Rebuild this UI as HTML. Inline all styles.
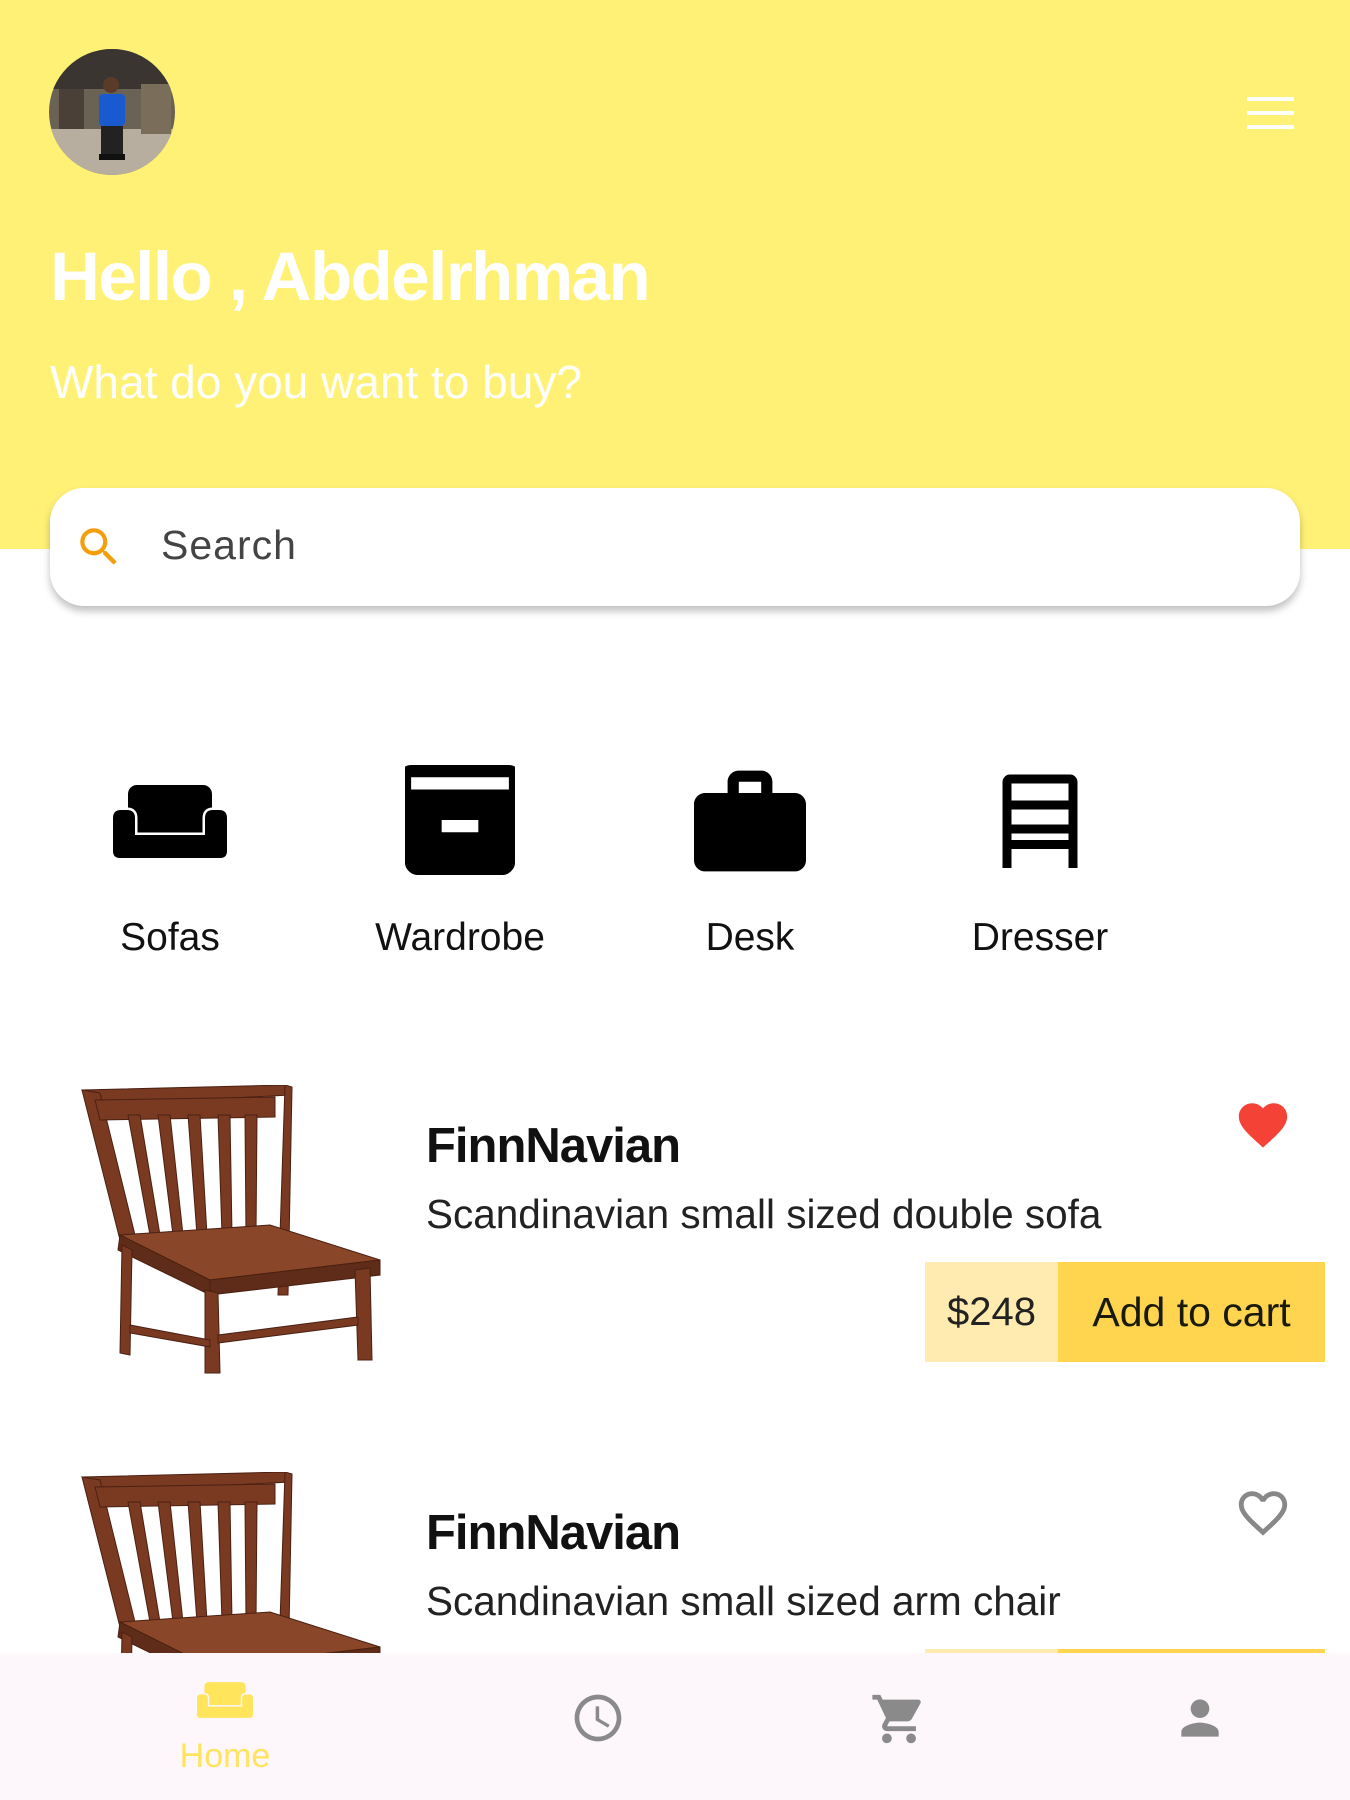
<!DOCTYPE html>
<html><head><meta charset="utf-8"><style>
*{margin:0;padding:0;box-sizing:border-box}
body{width:1350px;height:1800px;background:#fff;font-family:"Liberation Sans",sans-serif;position:relative;overflow:hidden}
.hdr{position:absolute;left:0;top:0;width:1350px;height:549px;background:#fff176}
.abs{position:absolute}
.cat{position:absolute;top:912px;width:200px;text-align:center;font-size:39px;color:#111}
.title{position:absolute;left:426px;font-size:49px;font-weight:bold;color:#111;letter-spacing:-1px}
.sub{position:absolute;left:426px;font-size:40.5px;color:#222}
.nav{position:absolute;left:0;top:1653px;width:1350px;height:147px;background:#fdf6fb}
</style></head><body>
<div class="hdr"></div>
<svg class="abs" style="left:49px;top:49px" width="126" height="126" viewBox="0 0 126 126">
<defs><clipPath id="c"><circle cx="63" cy="63" r="63"/></clipPath></defs>
<g clip-path="url(#c)">
<rect width="126" height="126" fill="#6b6256"/>
<rect y="0" width="126" height="40" fill="#3a3530"/>
<rect y="80" width="126" height="46" fill="#b8aea0"/>
<rect x="10" y="40" width="25" height="40" fill="#4a4038"/>
<rect x="92" y="35" width="30" height="50" fill="#7a6e5a"/>
<circle cx="62" cy="36" r="8" fill="#5a3a28"/>
<rect x="50" y="45" width="26" height="32" rx="4" fill="#1a5ad0"/>
<rect x="52" y="77" width="22" height="30" fill="#222"/>
<rect x="50" y="105" width="26" height="6" fill="#111"/>
</g></svg>
<svg class="abs" style="left:1247px;top:97px" width="47" height="32" viewBox="0 0 47 32"><rect y="0" width="47" height="4" fill="#fff"/><rect y="14" width="47" height="4" fill="#fff"/><rect y="28" width="47" height="4" fill="#fff"/></svg>
<div class="abs" style="left:50px;top:237px;font-size:69px;font-weight:bold;color:#fff;letter-spacing:-1.5px">Hello , Abdelrhman</div>
<div class="abs" style="left:50px;top:355px;font-size:46px;color:#fff">What do you want to buy?</div>
<div class="abs" style="left:50px;top:488px;width:1250px;height:118px;background:#fff;border-radius:34px;box-shadow:0 5px 8px rgba(0,0,0,.25)"></div>
<svg class="abs" style="left:74px;top:522px" width="50" height="50" viewBox="0 0 24 24"><path fill="#f59e0b" d="M15.5 14h-.79l-.28-.27A6.47 6.47 0 0 0 16 9.5 6.5 6.5 0 1 0 9.5 16c1.61 0 3.09-.59 4.23-1.57l.27.28v.79l5 4.99L20.49 19l-4.99-5zm-6 0C7.01 14 5 11.99 5 9.5S7.01 5 9.5 5 14 7.01 14 9.5 11.99 14 9.5 14z"/></svg>
<div class="abs" style="left:161px;top:522px;font-size:41px;color:#444;letter-spacing:1px">Search</div>

<svg class="abs" style="left:113px;top:785px" width="114" height="73" viewBox="0 0 114 73">
<rect x="15" y="0" width="84" height="48" rx="9" fill="#000"/>
<path d="M0 33 Q0 25 8 25 H14 Q22 25 22 33 V50 H92 V33 Q92 25 100 25 H106 Q114 25 114 33 V66 Q114 73 107 73 H7 Q0 73 0 66 Z" fill="#000" stroke="#fff" stroke-width="5"/>
<path d="M0 33 Q0 25 8 25 H14 Q22 25 22 33 V50 H92 V33 Q92 25 100 25 H106 Q114 25 114 33 V66 Q114 73 107 73 H7 Q0 73 0 66 Z" fill="#000"/>
</svg>
<svg class="abs" style="left:405px;top:765px" width="110" height="110" viewBox="3 3 18 18"><path fill="#000" d="M20 3H4c-1.1 0-2 .9-2 2v3.01c0 .72.43 1.34 1 1.69V19c0 1.1 1.1 2 2 2h14c.9 0 2-.9 2-2V9.7c.57-.35 1-.97 1-1.69V5c0-1.1-.9-2-2-2zm-5 11H9v-2h6v2zm5-7H4V5h16v2z"/></svg>
<svg class="abs" style="left:694px;top:765px" width="112" height="112" viewBox="2 2 20 20"><path fill="#000" d="M20 7h-4V5c0-1.1-.9-2-2-2h-4c-1.1 0-2 .9-2 2v2H4c-1.1 0-2 .9-2 2v10c0 1.1.9 2 2 2h16c1.1 0 2-.9 2-2V9c0-1.1-.9-2-2-2zM14 7h-4V5h4v2z"/></svg>
<svg class="abs" style="left:1002px;top:774px" width="76" height="94" viewBox="0 0 76 94"><g fill="none" stroke="#000" stroke-width="9"><rect x="5" y="5" width="66" height="26" rx="3"/><rect x="5" y="31" width="66" height="24"/><line x1="5" y1="55" x2="5" y2="94"/><line x1="71" y1="55" x2="71" y2="94"/></g><rect x="5" y="66" width="66" height="9" fill="#000"/></svg>
<div class="cat" style="left:70px;top:916px">Sofas</div>
<div class="cat" style="left:360px;top:916px">Wardrobe</div>
<div class="cat" style="left:650px;top:916px">Desk</div>
<div class="cat" style="left:940px;top:916px">Dresser</div>

<svg class="abs" style="left:80px;top:1085px" width="305" height="290" viewBox="0 0 305 290" id="chair">
<g fill="#7a3a22" stroke="#4a2012" stroke-width="1">
<path d="M2 5 L205 0 L210 10 L15 20 Z"/>
<path d="M2 5 L20 8 L55 150 L40 155 Z"/>
<path d="M205 0 L212 2 L208 210 L198 210 Z"/>
<path d="M15 15 L195 12 L195 32 L20 35 Z"/>
<path d="M48 30 L60 30 L80 150 L70 150Z"/>
<path d="M78 30 L90 30 L103 150 L93 150Z"/>
<path d="M108 30 L120 30 L127 150 L117 150Z"/>
<path d="M138 30 L150 30 L152 150 L142 150Z"/>
<path d="M165 30 L177 30 L176 150 L166 150Z"/>
<path d="M40 150 L190 140 L300 175 L130 195 Z" fill="#8a4628"/>
<path d="M40 150 L130 195 L130 210 L38 165Z" fill="#5e2c18"/>
<path d="M130 195 L300 175 L300 190 L130 210Z" fill="#5e2c18"/>
<path d="M42 160 L52 165 L50 270 L40 268Z"/>
<path d="M125 205 L138 208 L140 288 L125 288Z"/>
<path d="M275 185 L290 183 L292 275 L278 275Z"/>
<path d="M50 240 L130 255 L130 262 L50 248Z"/>
<path d="M138 250 L278 232 L278 240 L138 258Z"/>
</g></svg>
<svg class="abs" style="left:80px;top:1472px" width="305" height="181" viewBox="0 0 305 181"><use href="#chair"/></svg>

<div class="title" style="top:1118px">FinnNavian</div>
<div class="sub" style="top:1191px">Scandinavian small sized double sofa</div>
<svg class="abs" style="left:1234px;top:1096px" width="58" height="58" viewBox="0 0 24 24"><path fill="#f44336" d="M12 21.35l-1.45-1.32C5.4 15.36 2 12.28 2 8.5 2 5.42 4.42 3 7.5 3c1.74 0 3.41.81 4.5 2.09C13.09 3.81 14.76 3 16.5 3 19.58 3 22 5.420 22 8.5c0 3.78-3.4 6.86-8.55 11.54L12 21.35z"/></svg>
<div class="abs" style="left:925px;top:1262px;width:133px;height:100px;background:#ffeaaf;font-size:40px;color:#222;text-align:center;line-height:100px">$248</div>
<div class="abs" style="left:1058px;top:1262px;width:267px;height:100px;background:#ffd54f;font-size:41px;color:#1a1a0a;text-align:center;line-height:100px">Add to cart</div>

<div class="title" style="top:1505px">FinnNavian</div>
<div class="sub" style="top:1578px">Scandinavian small sized arm chair</div>
<svg class="abs" style="left:1234px;top:1484px" width="58" height="58" viewBox="0 0 24 24"><path fill="#888" d="M16.5 3c-1.74 0-3.41.81-4.5 2.09C10.91 3.810 9.24 3 7.5 3 4.42 3 2 5.42 2 8.5c0 3.78 3.4 6.86 8.55 11.54L12 21.35l1.45-1.32C18.6 15.36 22 12.28 22 8.5 22 5.42 19.58 3 16.5 3zm-4.4 15.55l-.1.1-.1-.1C7.14 14.24 4 11.39 4 8.5 4 6.5 5.5 5 7.5 5c1.54 0 3.04.99 3.57 2.36h1.87C13.46 5.99 14.96 5 16.5 5c2 0 3.5 1.5 3.5 3.5 0 2.89-3.14 5.74-7.9 10.05z"/></svg>
<div class="abs" style="left:925px;top:1649px;width:133px;height:20px;background:#ffeaaf"></div>
<div class="abs" style="left:1058px;top:1649px;width:267px;height:20px;background:#ffd54f"></div>

<div class="nav"></div>
<svg class="abs" style="left:197px;top:1678px" width="56" height="44" viewBox="0 0 114 73">
<rect x="15" y="0" width="84" height="48" rx="9" fill="#ffe45c"/>
<path d="M0 33 Q0 25 8 25 H14 Q22 25 22 33 V50 H92 V33 Q92 25 100 25 H106 Q114 25 114 33 V66 Q114 73 107 73 H7 Q0 73 0 66 Z" fill="#ffe45c" stroke="#fdf6fb" stroke-width="6"/>
<path d="M0 33 Q0 25 8 25 H14 Q22 25 22 33 V50 H92 V33 Q92 25 100 25 H106 Q114 25 114 33 V66 Q114 73 107 73 H7 Q0 73 0 66 Z" fill="#ffe45c"/>
</svg>
<div class="abs" style="left:150px;top:1737px;width:150px;text-align:center;font-size:34px;color:#ffe45c">Home</div>
<svg class="abs" style="left:570px;top:1690px" width="56" height="56" viewBox="0 0 24 24"><path fill="#8a8a8a" d="M11.99 2C6.47 2 2 6.48 2 12s4.47 10 9.99 10C17.52 22 22 17.52 22 12S17.52 2 11.99 2zM12 20c-4.42 0-8-3.58-8-8s3.58-8 8-8 8 3.58 8 8-3.58 8-8 8zm.5-13H11v6l5.25 3.15.75-1.23-4.5-2.67z"/></svg>
<svg class="abs" style="left:870px;top:1690px" width="58" height="58" viewBox="0 0 24 24"><path fill="#8a8a8a" d="M7 18c-1.1 0-1.99.9-1.99 2S5.9 22 7 22s2-.9 2-2-.9-2-2-2zM1 2v2h2l3.6 7.59-1.35 2.450c-.16.28-.25.61-.25.96 0 1.1.9 2 2 2h12v-2H7.42c-.14 0-.25-.11-.25-.25l.03-.12.9-1.63h7.45c.75 0 1.41-.41 1.75-1.03l3.58-6.49A1 1 0 0 0 20 4H5.21l-.94-2H1zm16 16c-1.1 0-1.99.9-1.99 2s.89 2 1.99 2 2-.9 2-2-.9-2-2-2z"/></svg>
<svg class="abs" style="left:1172px;top:1690px" width="56" height="56" viewBox="0 0 24 24"><path fill="#8a8a8a" d="M12 12c2.210 0 4-1.79 4-4s-1.79-4-4-4-4 1.79-4 4 1.79 4 4 4zm0 2c-2.67 0-8 1.34-8 4v2h16v-2c0-2.66-5.33-4-8-4z"/></svg>
</body></html>
